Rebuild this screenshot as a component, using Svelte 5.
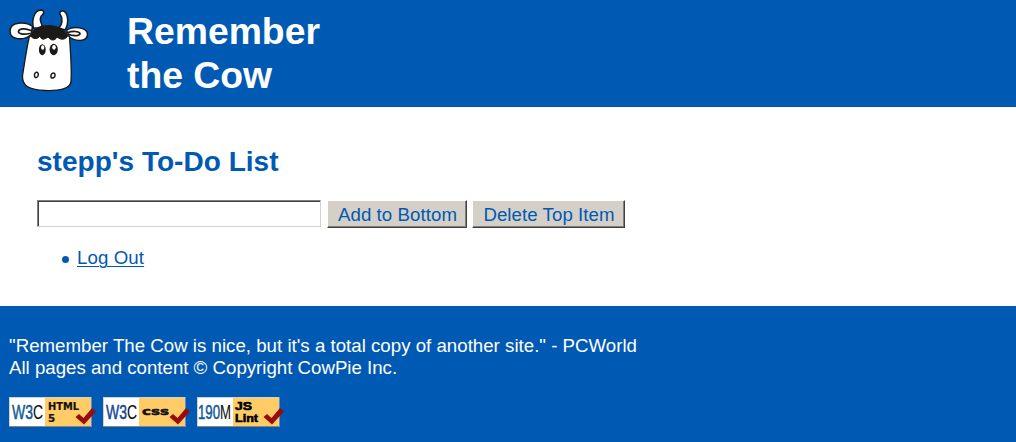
<script>
  let item = $state('');
  const badges = [
    { org: 'W3', end: 'C', lines: ['HTML', '5'], kind: 'html' },
    { org: 'W3', end: 'C', lines: ['css'], kind: 'css' },
    { org: '190', end: 'M', lines: ['JS', 'Lint'], kind: 'js' }
  ];
</script>

<header>
  <svg class="cow" width="80" height="84" viewBox="9 9 80 84" stroke="#1c1a19" stroke-width="1.5" stroke-linejoin="round" stroke-linecap="round">
    <path fill="#fff" d="M33.500 28C31.500 20 34 10.500 41 10C44 10 44.500 13.500 42.500 14.500C39.500 17 40 21 42 25L41 28ZM59 28C62.500 24 63 18 60.500 15C58.500 12 61 10.500 63.500 11C68.500 13 69 24 65 30Z" />
    <path fill="#fff" d="M32.500 26.500C25 21 10 22 10 31C10 40 23 41 31 35ZM67 30C73 26 87 27 87.500 34C88 43 74 42 67 35Z" />
    <path fill="none" d="M30 33.500C23 35 18 34 18.500 31C20 27.500 27 29 31 30.500M68 34C73 36.500 80 36 80 33.500C79 31 72 31 68 32.500" stroke-width="1.700" />
    <path fill="#fff" stroke-width="1.300" d="M29.500 36C27 46 24 66 22.500 76C22 87 31 90 45 90.500C59 91 71 89 71 81C72 68 70 47 69.500 36Z" />
    <path fill="#1c1a19" stroke-width="1" d="M30.500 36C33 29 39 25.500 49 25.500C59 26 66 30 67 37C64 40 61 40 57 37C55 41 51 41 48 37C44 40 41 40 40 36C37 40 33 39 30.500 36Z" />
    <g stroke="none"><ellipse cx="42.300" cy="49.700" rx="3.400" ry="5.500" fill="#1c1a19" /><ellipse cx="53.700" cy="49.500" rx="4.100" ry="5.700" fill="#1c1a19" /><ellipse cx="42.700" cy="47.500" rx="1.600" ry="2.300" fill="#fff" /><ellipse cx="54" cy="47.300" rx="1.800" ry="2.400" fill="#fff" /></g>
    <path fill="none" stroke-width="1.500" d="M34.500 74C36 71 38.500 72 38.300 75C38 78 34.500 78.500 34.500 75.500ZM51.500 74C54 72 55.800 73.500 54.800 76.500C53 79 50.500 78.500 51 75.500Z" />
  </svg>
  <h1>Remember<br />the Cow</h1>
</header>

<main>
  <h2>stepp's To-Do List</h2>
  <form onsubmit={(e) => e.preventDefault()}>
    <input type="text" bind:value={item} />
    <button class="add">Add to Bottom</button>
    <button class="delete">Delete Top Item</button>
  </form>
  <ul><li><a href="#logout">Log Out</a></li></ul>
</main>

<footer>
  <p><span class="quote">"Remember The Cow is nice, but it's a total copy of another site." - PCWorld</span><br />All pages and content © Copyright CowPie Inc.</p>
  <div class="badges">
    {#each badges as b}
      <svg class={b.kind} width="88" height="31" viewBox="0 0 88 31">
        <path fill="#d5d1c9" d="M0 0H83V30H0Z" />
        <path fill="#fff" d="M1 1H37V29H1Z" />
        <path fill="#fc6" d="M36 1H81V29H36Z" />
        <path fill="none" stroke="#89857d" d="M0 29.500H82.500V0" />
        <text class="org" x={b.kind === 'js' ? 1 : 3} y="22" textLength={b.kind === 'js' ? 33 : 31} lengthAdjust="spacingAndGlyphs">{b.org}<tspan class="end">{b.end}</tspan></text>
        {#if b.kind === 'js'}
          <text class="label" x="38" y="13" textLength="17" lengthAdjust="spacingAndGlyphs">JS</text>
          <text class="label" x="38" y="24.500" textLength="23" lengthAdjust="spacingAndGlyphs">Lint</text>
        {:else if b.kind === 'html'}
          <text class="label" x="39" y="12.500" textLength="31" lengthAdjust="spacingAndGlyphs">HTML</text>
          <text class="label" x="39" y="24.500">5</text>
        {:else}
          <text class="label" x="39" y="18" textLength="27" lengthAdjust="spacingAndGlyphs">css</text>
        {/if}
        <path fill="#990b0d" d="M66.500 20L70 17L74.500 21L83 11L87 14.500L75 27.500Z" />
      </svg>
    {/each}
  </div>
</footer>

<style>
  :global(body) { margin: 0; background: #fff; }
  :global(#app) { font: 18.67px/22px "Liberation Sans", Arial, sans-serif; color: #0059b3; }
  header { display: flex; box-sizing: border-box; height: 107px; padding: 9px 9px 0; background: #0059b3; color: #fff; }
  .cow { display: block; margin-right: 38px; }
  h1 { margin: 0; font-size: 37.33px; line-height: 44px; }
  main { box-sizing: border-box; height: 199px; padding: 38px 37px 0; }
  h2 { margin: 0 0 22px; font-size: 28px; line-height: 33px; letter-spacing: 0.03px; }
  form { display: flex; height: 28px; }
  input { box-sizing: border-box; width: 284px; height: 27px; margin: 0 6px 0 0; padding: 2px; font: inherit; color: inherit; background: #fff; outline: 0; border: 1px solid; border-color: #808080 #d4d0c8 #d4d0c8 #808080; box-shadow: inset 1px 1px #404040; }
  button { box-sizing: border-box; height: 28px; margin: 0 5px 0 0; padding: 2px 0 0 1px; font: inherit; letter-spacing: 0.06px; color: inherit; background: #d4d0c8; border: 1px solid; border-color: #fff #404040 #404040 #fff; box-shadow: inset -1px -1px #808080; white-space: nowrap; }
  .add { width: 140px; }
  .delete { width: 153px; }
  ul { margin: 19px 0 0; padding: 0 0 0 25px; list-style: none; }
  li { display: flex; align-items: center; }
  li::before { content: ""; width: 7px; height: 7px; margin: 2px 8px 0 0; border-radius: 50%; background: currentColor; }
  a { color: inherit; letter-spacing: 0.1px; text-decoration-thickness: 1px; text-underline-offset: 2px; }
  footer { box-sizing: border-box; height: 136px; padding: 29px 9px 0; background: #0059b3; color: #fff; }
  p { margin: 0; white-space: nowrap; }
  .quote { letter-spacing: 0.015px; }
  .badges { display: flex; gap: 6px; margin-top: 18px; }
  .badges svg { display: block; }
  .org { font: 19.5px "Liberation Sans", sans-serif; fill: #105b94; stroke: #105b94; stroke-width: 0.5; }
  .css .org { fill: #15469a; stroke: #15469a; }
  .org .end { fill: #111; stroke: #111; stroke-width: 0.1; }
  .label { font: 700 10.3px "DejaVu Sans", sans-serif; fill: #111; stroke: #111; stroke-width: 0.2; }
  .css .label { font-size: 11px; stroke-width: 0.5; }
  .js .label { font: 700 11.5px "Liberation Sans", sans-serif; fill: #000; stroke: #000; stroke-width: 0.6; }
</style>
